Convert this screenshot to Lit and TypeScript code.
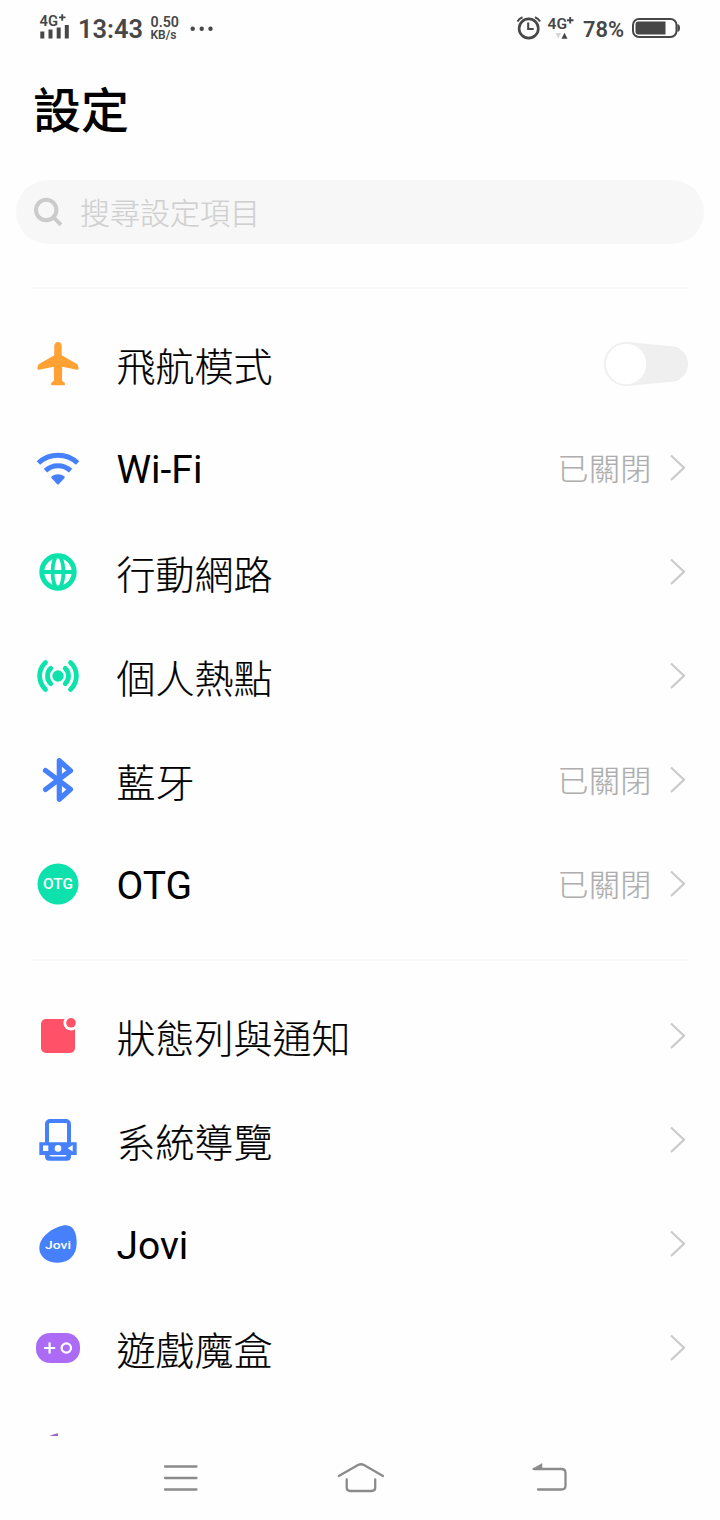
import { LitElement, html, svg, css } from "lit";
import { customElement, property } from "lit/decorators.js";
import { classMap } from "lit/directives/class-map.js";

const ORANGE = "#ffa133";
const BLUE = "#4680fb";
const GREEN = "#0ee2ac";
const RED = "#ff5168";
const PURPLE = "#ab6bf5";

/* Every glyph is drawn around the origin of a 48x48 box. */
const glyphs: Record<string, unknown> = {
  airplane: svg`<path fill=${ORANGE} d="M0-22c2.300 0 3.700 1.700 3.700 4v9.300L18.500-.2C20 .7 20.600 2.400 20.500 4.800c0 .9-.5 1.300-1.500 1L4.200 2.800 4 15c0 1.800.5 2.300 1.700 2.900 1 .6 1.300 1.300 1.300 2.400 0 .6-.4.9-1 .9H-6c-.6 0-1-.3-1-.9 0-1.100.3-1.800 1.300-2.400C-4.500 17.300-4 16.800-4 15l-.2-12.200L-19 5.800c-1 .3-1.500-.1-1.500-1C-20.600 2.400-20 .7-18.500-.2L-3.700-8.700V-18c0-2.300 1.400-4 3.700-4z"/>`,
  wifi: svg`<g fill="none" stroke=${BLUE} stroke-width="5">
      <path d="M-19.600-5A28.500 28.500 0 0 1 19.600-5"/><path d="M-12.600 2.600A18.500 18.500 0 0 1 12.600 2.600"/></g>
      <path fill=${BLUE} d="M0 6.200c2.500 0 4.500.8 6.200 2.100.7.600.7 1.200.1 1.900L1 15.900q-1 1-2 0l-5.300-5.700c-.6-.7-.6-1.300.1-1.900C-4.500 7-2.500 6.200 0 6.200z"/>`,
  globe: svg`<g fill="none" stroke=${GREEN}><circle r="16.200" stroke-width="5"/><ellipse rx="5.500" ry="16" stroke-width="3.800"/><path d="M-17 0H17" stroke-width="4"/></g>`,
  hotspot: svg`<circle r="5.700" fill=${GREEN}/><g fill="none" stroke=${GREEN} stroke-width="4.800" stroke-linecap="round">
      <path d="M-7.200-7.700A10.600 10.600 0 0 0-7.200 7.700"/><path d="M7.200-7.700A10.600 10.600 0 0 1 7.200 7.700"/>
      <path d="M-12.500-13.400A18.300 18.300 0 0 0-12.500 13.400"/><path d="M12.500-13.400A18.300 18.300 0 0 1 12.500 13.400"/></g>`,
  bluetooth: svg`<path fill="none" stroke=${BLUE} stroke-width="5.200" stroke-linejoin="round" stroke-linecap="round" d="M-12.500-9.500 12.500 9.300 1.300 19.300V-19.300L12.500-9.300-12.500 9.500"/>`,
  otg: svg`<circle r="20.500" fill=${GREEN}/><text class="badge" y="5" font-size="14" textLength="30" lengthAdjust="spacingAndGlyphs">OTG</text>`,
  notice: svg`<rect x="-17" y="-17" width="34" height="34" rx="5" fill=${RED}/><circle cx="13" cy="-13.200" r="7.600" fill="#fefefe"/><circle cx="13" cy="-13.200" r="4.800" fill=${RED}/>`,
  navigation: svg`<rect x="-11" y="-19" width="22" height="36" rx="3" fill="none" stroke=${BLUE} stroke-width="4"/>
      <path fill=${BLUE} d="M-18.700 2.300H18.700V15H13v1.500q0 4.200-4.200 4.200H-8.800q-4.200 0-4.200-4.200V15h-5.700z"/>
      <path fill="#fff" d="M-15 5.600h5.300v5.300H-15zM9.700 8.200l5-3.300v6.600zM-8.700 14.900H8.700q-.8 1.500-2 1.500H-6.700q-1.200 0-2-1.500z"/><circle cy="8.400" r="3.300" fill="#fff"/>`,
  jovi: svg`<path fill=${BLUE} d="M-18.700 4C-18.700-9-1-18.800 8-18.800 16-18.800 18.700-10 18.700-1 18.700 11 11 18.700 0 18.700-11 18.700-18.700 13-18.700 4z"/><text class="badge" y="5" font-size="11.500" textLength="26" lengthAdjust="spacingAndGlyphs">Jovi</text>`,
  game: svg`<rect x="-22" y="-15" width="44" height="30" rx="14" fill=${PURPLE}/><g fill="none" stroke="#fff" stroke-width="2.200"><path d="M-14 0h11.200M-8.400-5.600V5.600"/><circle cx="8.300" r="4.700"/></g>`,
  motion: svg`<path fill="#9b62cf" d="M0-18.800V10H-12L-9-15.800q5-2.600 9-3z"/>`,
};

@customElement("setting-row")
export class SettingRow extends LitElement {
  @property() icon = "";
  @property() label = "";
  @property() value = "";
  @property({ type: Boolean }) toggle = false;

  static styles = css`
    :host {
      display: grid;
      grid-template-columns: 48px 1fr auto auto;
      align-items: center;
      height: 104px;
      padding: 0 32px 0 34px;
    }
    .icon { width: 48px; height: 48px; display: block; }
    .badge { fill: #fff; text-anchor: middle; font-family: Roboto, sans-serif; font-weight: 500; }
    .label { padding: 7px 0 0 34.500px; font-size: 39px; line-height: 56px; font-weight: 300; -webkit-text-stroke: 0.200px #000; color: #000; white-space: nowrap; }
    .label.latin { padding-top: 4px; font-weight: 400; -webkit-text-stroke: 0; }
    .value { padding: 4px 18.500px 0 0; font-size: 31px; line-height: 44px; letter-spacing: 0.300px; font-weight: 300; -webkit-text-stroke: 0.200px #adadad; color: #adadad; }
    .chevron { width: 18px; height: 28px; display: block; }
    .switch { width: 86px; height: 46px; display: block; }
  `;

  render() {
    const latin = /^[\x20-\x7e]+$/.test(this.label);
    return html`
      <svg class="icon" viewBox="-24 -24 48 48">${glyphs[this.icon]}</svg>
      <span class=${classMap({ label: true, latin })}>${this.label}</span>
      ${this.value ? html`<span class="value">${this.value}</span>` : html`<span></span>`}
      ${this.toggle
        ? html`<svg class="switch" viewBox="0 0 86 46"><path fill="#efefef" d="M24 1 68 5A18 18 0 0 1 68 41L24 45A22 22 0 0 1 24 1z"/><circle cx="24" cy="23" r="20.200" fill="#fff"/></svg>`
        : html`<svg class="chevron" viewBox="0 0 18 28"><path d="M1 1.500 14 13.700 1 26" fill="none" stroke="#cacaca" stroke-width="2.200"/></svg>`}
    `;
  }
}

@customElement("status-bar")
export class StatusBar extends LitElement {
  static styles = css`
    :host { display: flex; justify-content: space-between; height: 56px; padding: 0 39px 0 39px; color: #474747; }
    .side { display: flex; }
    svg { display: block; height: 56px; fill: #474747; }
    text { font-family: Roboto, sans-serif; font-weight: 600; }
  `;

  render() {
    return html`
      <div class="side">
        <svg width="38" viewBox="39 0 38 56">
          <text x="39.500" y="26.300" font-size="15.500" textLength="18.500" lengthAdjust="spacingAndGlyphs">4G</text>
          <path d="M59 17.400h6.500M62.200 14.200v6.500" stroke="#474747" stroke-width="1.900"/>
          <path d="M40.300 31.500h4v7h-4zM48.500 29.500h4v9h-4zM56.700 27.500h4v11h-4zM64.800 25h4v13.500h-4z"/>
        </svg>
        <svg width="70" viewBox="77 0 70 56"><text x="78" y="38" font-size="26" textLength="65" lengthAdjust="spacingAndGlyphs">13:43</text></svg>
        <svg width="38" viewBox="147 0 38 56">
          <text x="150.500" y="27" font-size="14" textLength="28.500" lengthAdjust="spacingAndGlyphs">0.50</text>
          <text x="150.500" y="38.800" font-size="12" textLength="26" lengthAdjust="spacingAndGlyphs">KB/s</text>
        </svg>
        <svg width="30" viewBox="185 0 30 56"><circle cx="192.700" cy="28.700" r="2.200"/><circle cx="201.700" cy="28.700" r="2.200"/><circle cx="210.500" cy="28.700" r="2.200"/></svg>
      </div>
      <div class="side">
        <svg width="30" viewBox="515 0 30 56">
          <g fill="none" stroke="#474747"><circle cx="528.700" cy="28.500" r="9.600" stroke-width="2.600"/><path d="M528.200 22.500v6.500h5.500" stroke-width="2.100"/><path d="M517.500 21.500q1.500-3 5-4.300M540 21.500q-1.500-3-5-4.300" stroke-width="2"/></g>
        </svg>
        <svg width="35" viewBox="545 0 35 56">
          <text x="547.500" y="29" font-size="15.500" textLength="19.500" lengthAdjust="spacingAndGlyphs">4G</text>
          <path d="M567 20.200h6.500M570.200 17v6.500" stroke="#474747" stroke-width="1.900"/>
          <path d="M555.500 33h5.500l-2.700 5.500z" fill="#d5d5d5"/><path d="M561.500 38.800h6l-3-6z"/>
        </svg>
        <svg width="48" viewBox="580 0 48 56"><text x="583" y="36.800" font-size="22" textLength="41" lengthAdjust="spacingAndGlyphs">78%</text></svg>
        <svg width="53" viewBox="628 0 53 56">
          <rect x="633" y="19" width="43.500" height="18" rx="6" fill="none" stroke="#474747" stroke-width="2"/>
          <path d="M638.500 21.500H665.500V34.500H638.500q-3 0-3-3v-7q0-3 3-3z"/><path d="M677.500 24q2.500.5 2.500 4t-2.500 4z"/>
        </svg>
      </div>
    `;
  }
}

interface Item {
  icon: string;
  label: string;
  value?: string;
  toggle?: boolean;
}

@customElement("app-root")
export class AppRoot extends LitElement {
  static styles = css`
    :host {
      display: flex;
      flex-direction: column;
      height: 1520px;
      background: #fefefe;
      font-family: Roboto, "Noto Sans CJK TC", sans-serif;
      overflow: hidden;
    }
    .title { box-sizing: border-box; margin: 0; padding: 22px 33px 0; height: 124px; flex: none; font-size: 48px; line-height: 68px; font-weight: 500; color: #000; }
    .search { display: flex; align-items: center; height: 64px; flex: none; margin: 0 16px; padding-left: 16px; border-radius: 32px; background: #f7f7f7; color: #d0d0d0; }
    .search-icon { width: 32px; height: 32px; margin-right: 16px; }
    .search-text { font-size: 30px; line-height: 44px; padding-top: 4px; font-weight: 300; -webkit-text-stroke: 0.200px #d0d0d0; }
    .list { display: flex; flex-direction: column; height: 1192px; flex: none; overflow: hidden; }
    .divider { height: 2px; flex: none; margin: 23px 32px; background: #f7f7f7; }
    .divider.first { margin-top: 43px; }
    .navbar { display: flex; justify-content: center; height: 84px; flex: none; background: #fefefe; }
    .navbar svg { width: 190px; height: 84px; fill: none; stroke: #8b8b8b; stroke-width: 2.300; stroke-linecap: round; stroke-linejoin: round; }
  `;

  private network: Item[] = [
    { icon: "airplane", label: "飛航模式", toggle: true },
    { icon: "wifi", label: "Wi-Fi", value: "已關閉" },
    { icon: "globe", label: "行動網路" },
    { icon: "hotspot", label: "個人熱點" },
    { icon: "bluetooth", label: "藍牙", value: "已關閉" },
    { icon: "otg", label: "OTG", value: "已關閉" },
  ];

  private system: Item[] = [
    { icon: "notice", label: "狀態列與通知" },
    { icon: "navigation", label: "系統導覽" },
    { icon: "jovi", label: "Jovi" },
    { icon: "game", label: "遊戲魔盒" },
    { icon: "motion", label: "智慧體感" },
  ];

  private rows(items: Item[]) {
    return items.map(
      (item) => html`<setting-row
        lang="zh-Hant"
        .icon=${item.icon}
        .label=${item.label}
        .value=${item.value ?? ""}
        .toggle=${item.toggle ?? false}
      ></setting-row>`,
    );
  }

  render() {
    return html`
      <status-bar></status-bar>
      <h1 class="title" lang="zh-Hant">設定</h1>
      <div class="search" lang="zh-Hant">
        <svg class="search-icon" viewBox="32 196 32 32"><g fill="none" stroke="#cbcbcb" stroke-width="4"><circle cx="46.200" cy="210" r="10.200"/><path d="M53.500 217.300 61 224.800"/></g></svg>
        <span class="search-text">搜尋設定項目</span>
      </div>
      <div class="list">
        <div class="divider first"></div>
        <div class="group">${this.rows(this.network)}</div>
        <div class="divider"></div>
        <div class="group">${this.rows(this.system)}</div>
      </div>
      <nav class="navbar">
        <svg viewBox="75 1436 190 84"><path d="M165 1466.500h31.500M165 1478h31.500M165 1489.500h31.500"/></svg>
        <svg viewBox="265 1436 190 84"><path d="M338.800 1476 358 1465q3-1.500 6 0L383 1476M346.700 1479.500v8q0 3.500 3.500 3.500h21.500q3.500 0 3.500-3.500v-8"/></svg>
        <svg viewBox="455 1436 190 84"><path d="M538 1489.500h23.500q4 0 4-4V1473q0-4-4-4H534"/><path d="M532.500 1469 542 1463.500V1469z" fill="#8b8b8b" stroke-width=".5"/></svg>
      </nav>
    `;
  }
}
